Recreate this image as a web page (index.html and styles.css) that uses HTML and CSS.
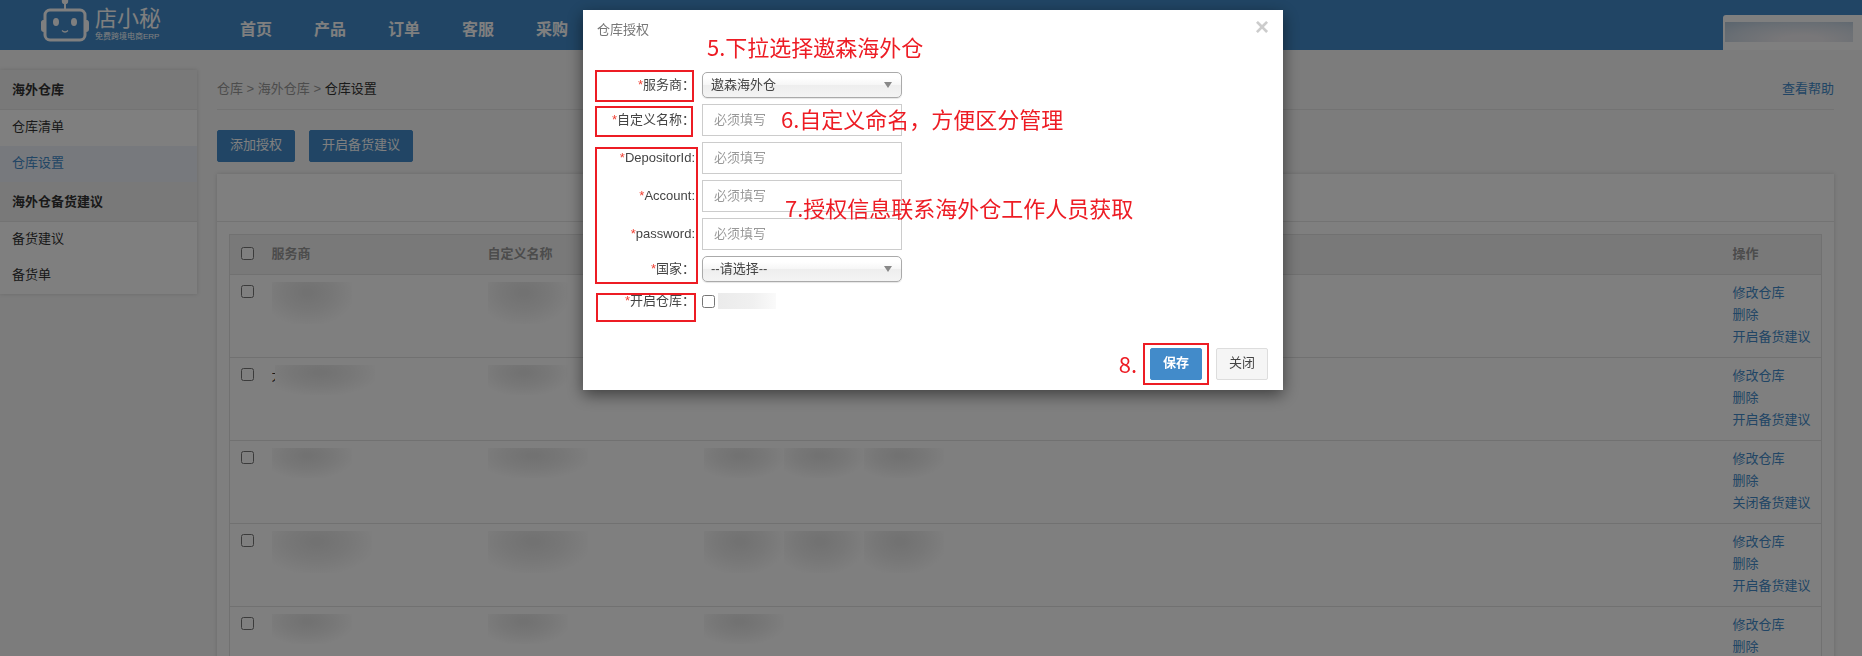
FILE: index.html
```
<!DOCTYPE html>
<html lang="zh-CN">
<head>
    <meta charset="UTF-8">
    <meta name="viewport" content="width=device-width, initial-scale=1.0">
    <title>仓库设置 - 店小秘</title>
    <link rel="stylesheet" href="styles.css">
</head>
<body>

    <header class="header">
        <a class="logo" href="#">
            <svg class="logo-icon" viewBox="0 0 48 42" width="48" height="42" fill="none" stroke="#fff">
                <path d="M24 4v7" stroke-width="2"/>
                <circle cx="24" cy="1" r="3.2" fill="#fff" stroke="none"/>
                <rect x="4" y="10" width="40" height="30" rx="5" stroke-width="3"/>
                <path d="M3 20c-3 0-3 2-3 3v6c0 2 1 3 3 3zM45 20c3 0 3 2 3 3v6c0 2-1 3-3 3z" fill="#fff" stroke="none"/>
                <ellipse cx="15" cy="22" rx="3" ry="4" fill="#fff" stroke="none"/>
                <ellipse cx="33" cy="22" rx="3" ry="4" fill="#fff" stroke="none"/>
                <path d="M21 30.500q3 3 6 0" stroke-width="1.200"/>
            </svg>
            <span class="logo-text">
                <span class="logo-name">店小秘</span>
                <span class="logo-sub">免费跨境电商ERP</span>
            </span>
        </a>
        <nav class="nav">
            <a href="#">首页</a>
            <a href="#">产品</a>
            <a href="#">订单</a>
            <a href="#">客服</a>
            <a href="#">采购</a>
        </nav>
        <div class="user"><div class="user-name"></div></div>
    </header>

    <div class="page">
        <aside class="sidebar">
            <h2>海外仓库</h2>
            <a href="#">仓库清单</a>
            <a href="#" class="active">仓库设置</a>
            <h2>海外仓备货建议</h2>
            <a href="#">备货建议</a>
            <a href="#">备货单</a>
        </aside>

        <main class="main">
            <div class="topline">
                <div class="crumbs">仓库 &gt; 海外仓库 &gt; <span>仓库设置</span></div>
                <a href="#">查看帮助</a>
            </div>
            <div class="toolbar">
                <button class="btn btn-primary">添加授权</button>
                <button class="btn btn-primary">开启备货建议</button>
            </div>
            <div class="panel">
                <div class="panel-head"></div>
                <table class="table">
                    <thead>
                        <tr>
                            <th class="col-check"><input type="checkbox" aria-label="全选"></th>
                            <th class="col-provider">服务商</th>
                            <th class="col-name">自定义名称</th>
                            <th></th>
                            <th class="col-action">操作</th>
                        </tr>
                    </thead>
                    <tbody>
                        <tr>
                            <td><input type="checkbox" aria-label="选择"></td>
                            <td><div class="smudge tall"></div></td>
                            <td><div class="smudge tall"></div></td>
                            <td></td>
                            <td><a href="#">修改仓库</a><a href="#">删除</a><a href="#">开启备货建议</a></td>
                        </tr>
                        <tr>
                            <td><input type="checkbox" aria-label="选择"></td>
                            <td><div class="masked"><span class="cut">大</span><div class="smudge wide"></div></div></td>
                            <td><div class="smudge"></div></td>
                            <td></td>
                            <td><a href="#">修改仓库</a><a href="#">删除</a><a href="#">开启备货建议</a></td>
                        </tr>
                        <tr>
                            <td><input type="checkbox" aria-label="选择"></td>
                            <td><div class="smudge"></div></td>
                            <td><div class="smudge wide"></div></td>
                            <td><div class="masked"><div class="smudge"></div><div class="smudge"></div><div class="smudge"></div></div></td>
                            <td><a href="#">修改仓库</a><a href="#">删除</a><a href="#">关闭备货建议</a></td>
                        </tr>
                        <tr>
                            <td><input type="checkbox" aria-label="选择"></td>
                            <td><div class="smudge tall wide"></div></td>
                            <td><div class="smudge tall wide"></div></td>
                            <td><div class="masked"><div class="smudge tall"></div><div class="smudge tall"></div><div class="smudge tall"></div></div></td>
                            <td><a href="#">修改仓库</a><a href="#">删除</a><a href="#">开启备货建议</a></td>
                        </tr>
                        <tr>
                            <td><input type="checkbox" aria-label="选择"></td>
                            <td><div class="smudge"></div></td>
                            <td><div class="smudge"></div></td>
                            <td><div class="smudge"></div></td>
                            <td><a href="#">修改仓库</a><a href="#">删除</a></td>
                        </tr>
                    </tbody>
                </table>
            </div>
        </main>
    </div>

    <div class="overlay">
        <div class="modal" role="dialog" aria-labelledby="modalTitle">
            <div class="modal-head">
                <h1 id="modalTitle">仓库授权</h1>
                <button class="close" aria-label="关闭窗口">×</button>
            </div>

            <form class="form">
                <label for="provider"><i>*</i>服务商：</label>
                <div class="select">
                    <select id="provider"><option>遨森海外仓</option></select>
                </div>
                <label for="alias"><i>*</i>自定义名称：</label>
                <input type="text" id="alias" placeholder="必须填写">
                <label for="depositor"><i>*</i>DepositorId:</label>
                <input type="text" id="depositor" placeholder="必须填写">
                <label for="account"><i>*</i>Account:</label>
                <input type="text" id="account" placeholder="必须填写">
                <label for="password"><i>*</i>password:</label>
                <input type="text" id="password" placeholder="必须填写">
                <label for="country"><i>*</i>国家：</label>
                <div class="select">
                    <select id="country"><option>--请选择--</option></select>
                </div>
                <label for="warehouse"><i>*</i>开启仓库：</label>
                <div class="check">
                    <input type="checkbox" id="warehouse">
                    <span class="check-name"></span>
                </div>
            </form>

            <div class="modal-foot">
                <button class="btn btn-primary btn-save">保存</button>
                <button class="btn btn-default">关闭</button>
            </div>

            <!-- 操作步骤标注 -->
            <div class="mark mark-provider"></div>
            <div class="mark mark-alias"></div>
            <div class="mark mark-auth"></div>
            <div class="mark mark-open"></div>
            <div class="mark mark-save"></div>
            <div class="note note-5">5.下拉选择遨森海外仓</div>
            <div class="note note-6">6.自定义命名，方便区分管理</div>
            <div class="note note-7">7.授权信息联系海外仓工作人员获取</div>
            <div class="note note-8">8.</div>
        </div>
    </div>

</body>
</html>
```
FILE: styles.css
```
* {
    margin: 0;
    padding: 0;
    box-sizing: border-box;
    font-family: "Liberation Sans", "Noto Sans CJK SC", sans-serif;
}

body {
    height: 100vh;
    overflow: hidden;
    background: #f8f8f8;
    color: #333;
    font-size: 13px;
    line-height: 22px;
}

a {
    color: #428bca;
    text-decoration: none;
}

/* header */
.header {
    height: 50px;
    background: #428bca;
    display: flex;
    align-items: flex-start;
    padding-left: 41px;
}

.logo {
    display: flex;
    gap: 6px;
    width: 178px;
    color: #fff;
}

.logo-text {
    display: flex;
    flex-direction: column;
    padding-top: 7px;
}

.logo-name {
    font-size: 22px;
    line-height: 24px;
}

.logo-sub {
    font-size: 8px;
    line-height: 12px;
    white-space: nowrap;
}

.nav {
    display: flex;
}

.nav a {
    padding: 0 21px;
    line-height: 60px;
    font-size: 16px;
    font-weight: bold;
    color: #fff;
}

.user {
    width: 139px;
    height: 35px;
    margin: 15px 0 0 auto;
    padding: 7px 9px 8px 2px;
    background: #fff;
    border-top-left-radius: 3px;
}

.user-name {
    height: 20px;
    background: radial-gradient(ellipse at 60% 90%, #f0eef2 20%, #d3dde8 65%, #b4c9dc);
}

/* page */
.page {
    display: flex;
    align-items: flex-start;
    gap: 20px;
    padding: 20px 28px 0 0;
}

.sidebar {
    width: 197px;
    background: #fff;
    box-shadow: 0 0 4px rgba(0, 0, 0, 0.15);
}

.sidebar h2 {
    height: 40px;
    padding-left: 12px;
    line-height: 39px;
    font-size: 13px;
    background: #f3f3f3;
    border-bottom: 1px solid #e6e6e6;
}

.sidebar a {
    display: block;
    height: 36px;
    padding-left: 12px;
    line-height: 34px;
    color: #333;
}

.sidebar a.active {
    background: #eef2fb;
    color: #428bca;
}

.main {
    flex: 1;
}

.topline {
    display: flex;
    justify-content: space-between;
    height: 40px;
    line-height: 37px;
    border-bottom: 1px solid #e6e6e6;
}

.crumbs {
    color: #999;
}

.crumbs span {
    color: #333;
}

.toolbar {
    display: flex;
    gap: 14px;
    padding: 20px 0 12px;
}

.btn {
    height: 32px;
    padding: 0 12px 2px;
    border: 1px solid #428bca;
    border-radius: 2px;
    font-size: 13px;
    line-height: 26px;
}

.btn-primary {
    background: #428bca;
    color: #fff;
}

.btn-default {
    background: #f5f5f5;
    border-color: #ddd;
    color: #444;
}

.panel {
    background: #fff;
    padding-bottom: 12px;
    box-shadow: 0 0 4px rgba(0, 0, 0, 0.15);
}

.panel-head {
    height: 48px;
    border-bottom: 1px solid #e6e6e6;
    margin-bottom: 12px;
}

.table {
    width: calc(100% - 24px);
    margin: 0 12px;
    table-layout: fixed;
    border-collapse: collapse;
    border: 1px solid #e2e2e2;
}

.table th {
    height: 40px;
    padding: 0 11px 2px;
    text-align: left;
    color: #999;
    background: #f3f3f3;
    border-bottom: 1px solid #e2e2e2;
}

.table td {
    height: 83px;
    padding: 7px 11px 9px;
    vertical-align: top;
    border-bottom: 1px solid #e2e2e2;
}

.table td a {
    display: block;
    white-space: nowrap;
}

.table input {
    display: block;
}

.table td input {
    margin-top: 3px;
}

.table .col-check {
    width: 31px;
}

.col-provider,
.col-name {
    width: 216px;
}

.col-action {
    width: 100px;
}

.masked {
    display: flex;
}

.cut {
    width: 3px;
    overflow: hidden;
}

.smudge {
    width: 80px;
    height: 30px;
    background: radial-gradient(ellipse at 45% 25%, #e4e4e4 5%, #efefef 40%, #fff 78%);
}

.smudge.tall {
    height: 42px;
}

.smudge.wide {
    width: 100px;
}

/* modal */
.overlay {
    position: fixed;
    inset: 0;
    display: flex;
    justify-content: center;
    align-items: flex-start;
    padding: 10px 0 0 4px;
    background: rgba(0, 0, 0, 0.5);
}

.modal {
    position: relative;
    width: 700px;
    background: #fff;
    box-shadow: 0 5px 15px rgba(0, 0, 0, 0.5);
}

.modal-head {
    display: flex;
    justify-content: space-between;
    align-items: center;
    height: 40px;
    padding: 0 14px;
}

.modal-head h1 {
    font-size: 13px;
    font-weight: normal;
    color: #777;
}

.close {
    border: none;
    background: none;
    color: #ccc;
    font-size: 24px;
    font-weight: bold;
    line-height: 20px;
    height: 32px;
    padding-bottom: 6px;
}

.form {
    display: grid;
    grid-template-columns: 112px 200px;
    column-gap: 7px;
    row-gap: 6px;
    align-items: center;
    padding-top: 22px;
}

.form label {
    text-align: right;
    white-space: nowrap;
    color: #444;
}

.form label i {
    font-style: normal;
    color: #f04134;
}

.form input[type="text"] {
    height: 32px;
    padding: 0 11px 2px;
    border: 1px solid #ccc;
    font-size: 13px;
}

.form input::placeholder {
    color: #999;
}

.select {
    position: relative;
}

.select select {
    display: block;
    width: 100%;
    height: 26px;
    padding: 0 8px 1px;
    appearance: none;
    border: 1px solid #aaa;
    border-radius: 5px;
    background: linear-gradient(#fff 20%, #f6f6f6 50%, #eee 52%, #f4f4f4 100%);
    box-shadow: 0 1px 1px rgba(0, 0, 0, 0.1);
    font-size: 13px;
    color: #444;
}

.select::after {
    content: "";
    position: absolute;
    right: 10px;
    top: 10px;
    border: 4px solid transparent;
    border-top: 6px solid #888;
    border-bottom: none;
}

.check {
    display: flex;
    gap: 3px;
    height: 26px;
    align-items: center;
}

.check-name {
    width: 58px;
    height: 16px;
    background: linear-gradient(to right, #ebebeb, #f0f0f0 60%, #fafafa);
}

.modal-foot {
    display: flex;
    justify-content: flex-end;
    gap: 14px;
    padding: 34px 15px 10px;
}

.btn-save {
    font-weight: bold;
}

/* red marks over the form */
.mark {
    position: absolute;
    border: 2px solid #ed1c24;
    pointer-events: none;
}

.mark-provider {
    left: 12px;
    top: 60px;
    width: 99px;
    height: 32px;
}

.mark-alias {
    left: 12px;
    top: 96px;
    width: 98px;
    height: 31px;
}

.mark-auth {
    left: 12px;
    top: 137px;
    width: 103px;
    height: 137px;
}

.mark-open {
    left: 13px;
    top: 283px;
    width: 100px;
    height: 29px;
}

.mark-save {
    right: 74px;
    top: 333px;
    width: 66px;
    height: 42px;
}

.note {
    position: absolute;
    font-family: "Noto Sans CJK SC", sans-serif;
    font-size: 22px;
    line-height: 30px;
    color: #ed1c24;
    white-space: nowrap;
    pointer-events: none;
}

.note-5 {
    left: 124px;
    top: 21px;
}

.note-6 {
    left: 198px;
    top: 93px;
}

.note-7 {
    left: 202px;
    top: 182px;
}

.note-8 {
    right: 146px;
    top: 338px;
}
```
